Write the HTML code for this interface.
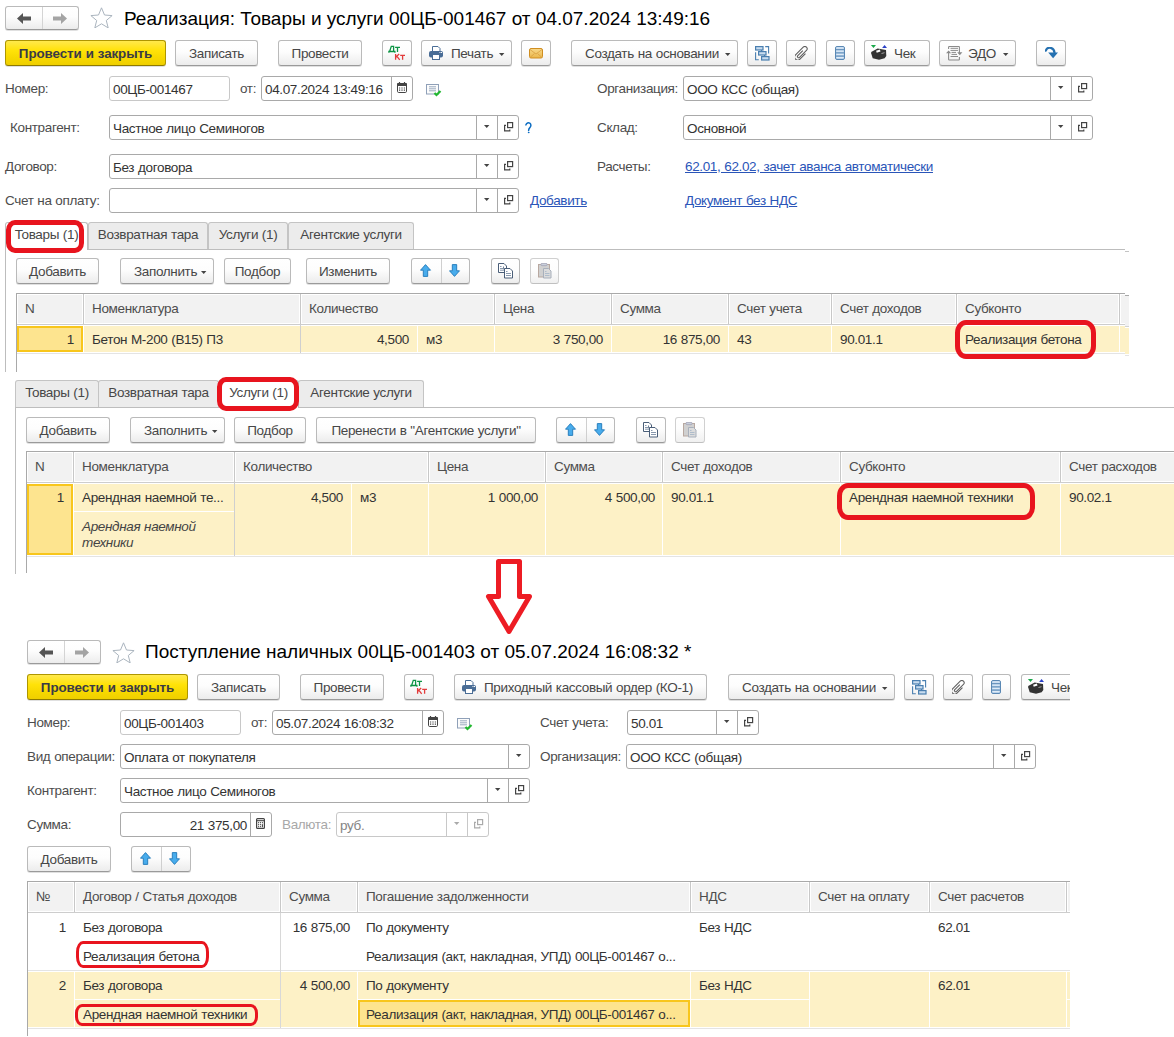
<!DOCTYPE html><html><head><meta charset="utf-8"><style>
html,body{margin:0;padding:0;background:#fff;width:1174px;height:1037px;overflow:hidden;position:relative}
.t{position:absolute;font-family:"Liberation Sans",sans-serif;font-size:13.5px;letter-spacing:-0.35px;word-spacing:0.4px;white-space:nowrap}
.b{position:absolute;border:1px solid #bababa;border-bottom-color:#9a9a9a;border-radius:3px;background:linear-gradient(#ffffff 0%,#fdfdfd 45%,#ececec 100%);box-shadow:0 1px 0 rgba(0,0,0,0.12)}
.bd{position:absolute;border:1px solid #d0d0d0;border-bottom-color:#c0c0c0;border-radius:3px;background:linear-gradient(#ffffff 0%,#fdfdfd 45%,#f0f0f0 100%)}
.by{position:absolute;border:1px solid #ae9600;border-bottom-color:#8f7a00;border-radius:3px;background:linear-gradient(#ffe94c 0%,#ffe208 40%,#f7d800 70%,#efcf00 100%);box-shadow:0 1px 0 rgba(0,0,0,0.12)}
.f{position:absolute;border:1px solid #a9a9a9;border-radius:3px;background:#fff}
</style></head><body>

<div class="b" style="left:5px;top:6px;width:72px;height:22px"></div>
<div style="position:absolute;left:42px;top:7px;width:1px;height:22px;background:#d4d4d4"></div>
<svg style="position:absolute;left:17px;top:13px" width="14" height="11"><path d="M0 5.5l6-5.5v3.5h8v4h-8v3.5z" fill="#555"/></svg>
<svg style="position:absolute;left:53px;top:13px" width="14" height="11"><path d="M14 5.5l-6-5.5v3.5h-8v4h8v3.5z" fill="#a4a4a4"/></svg>
<svg style="position:absolute;left:90px;top:7px" width="23" height="21" viewBox="0 0 23 21"><path d="M11.5 0.8l3 7.2l7.6 0.6l-5.8 4.9l1.9 7.4l-6.7-4.1l-6.7 4.1l1.9-7.4l-5.8-4.9l7.6-0.6z" fill="none" stroke="#aab4be" stroke-width="1"/></svg>
<div style="position:absolute;left:124px;top:7px;height:24px;line-height:24px;font-family:'Liberation Sans',sans-serif;font-size:19px;color:#000;white-space:nowrap">Реализация: Товары и услуги 00ЦБ-001467 от 04.07.2024 13:49:16</div>
<div class="by" style="left:5px;top:40px;width:159px;height:24px"></div>
<div class="t" style="left:5px;top:41px;height:25px;line-height:25px;color:#3a3a46;width:161px;text-align:center;font-weight:bold;font-size:13.4px;letter-spacing:-0.1px;">Провести и закрыть</div>
<div class="b" style="left:175px;top:40px;width:81px;height:24px"></div>
<div class="t" style="left:175px;top:41px;height:25px;line-height:25px;color:#474747;width:83px;text-align:center;">Записать</div>
<div class="b" style="left:278px;top:40px;width:82px;height:24px"></div>
<div class="t" style="left:278px;top:41px;height:25px;line-height:25px;color:#474747;width:84px;text-align:center;">Провести</div>
<div class="b" style="left:382px;top:40px;width:28px;height:24px"></div>
<svg style="position:absolute;left:388px;top:45px" width="18" height="16"><path d="M1.6 6.5L3.3 1.3H5.6V6.5M0.9 7.8V6.5H6.9V7.8M7.1 2.4H12M9.5 2.4V7" fill="none" stroke="#0c9444" stroke-width="1.3"/><path d="M7.6 8.9V14.8M7.8 12L11.2 8.9M8.8 11.2L11.7 14.8M12.2 10.4H17M14.6 10.4V14.8" fill="none" stroke="#e23a3a" stroke-width="1.3"/></svg>
<div class="b" style="left:421px;top:40px;width:89px;height:24px"></div>
<div class="t" style="left:451px;top:41px;height:25px;line-height:25px;color:#474747;text-align:left;">Печать</div>
<svg style="position:absolute;left:499px;top:53px" width="6" height="4"><path d="M0 0h5.4l-2.7 3z" fill="#444"/></svg>
<svg style="position:absolute;left:429px;top:46px" width="15" height="14"><path d="M3.5 0.5h5.5l2 2v3h-7.5z" fill="#fff" stroke="#4a6d96"/><rect x="0" y="5" width="14" height="6.5" rx="2" fill="#4a6d96"/><rect x="3.5" y="8.5" width="7" height="5" fill="#fff" stroke="#4a6d96"/><path d="M10.5 6.5h1M12 6.5h1" stroke="#fff"/></svg>
<div class="b" style="left:521px;top:40px;width:28px;height:24px"></div>
<svg style="position:absolute;left:529px;top:48px" width="15" height="11"><defs><linearGradient id="mg" x1="0" y1="0" x2="0" y2="1"><stop offset="0" stop-color="#f9d98a"/><stop offset="1" stop-color="#eab64a"/></linearGradient></defs><rect x="0.5" y="0.5" width="13" height="9.5" rx="1.5" fill="url(#mg)" stroke="#d08e20"/><path d="M1 1.5l6 4.5l6-4.5M1 9.5l4.5-4M13 9.5l-4.5-4" fill="none" stroke="#d8a040" stroke-width="0.8"/></svg>
<div class="b" style="left:571px;top:40px;width:165px;height:24px"></div>
<div class="t" style="left:585px;top:41px;height:25px;line-height:25px;color:#474747;text-align:left;">Создать на основании</div>
<svg style="position:absolute;left:725px;top:53px" width="6" height="4"><path d="M0 0h5.4l-2.7 3z" fill="#444"/></svg>
<div class="b" style="left:747px;top:40px;width:28px;height:24px"></div>
<svg style="position:absolute;left:755px;top:46px" width="15" height="15"><rect x="0.6" y="0.6" width="7.4" height="3.4" fill="#c8dcef" stroke="#4a7fb0" stroke-width="1.2"/><rect x="3.6" y="5.6" width="7.4" height="3.4" fill="#c8dcef" stroke="#4a7fb0" stroke-width="1.2"/><rect x="6.6" y="10.6" width="7.4" height="3.4" fill="#c8dcef" stroke="#4a7fb0" stroke-width="1.2"/><path d="M6.5 4v1.6M9.5 9v1.6" stroke="#4a7fb0" stroke-width="1.1"/><path d="M10.2 0.6h3.4v7" fill="none" stroke="#4a7fb0" stroke-width="1.1"/><path d="M0.6 6.2v7.6h3.2" fill="none" stroke="#4a7fb0" stroke-width="1.1"/></svg>
<div class="b" style="left:786px;top:40px;width:28px;height:24px"></div>
<svg style="position:absolute;left:795px;top:46px" width="14" height="14"><path transform="translate(6.5,6.8) rotate(45)" d="M-0.6 -2.5V4.6A1.2 1.2 0 0 0 1.8 4.6V-5.2A2.3 2.3 0 0 0 -2.8 -5.2V5.6A3.1 3.1 0 0 0 3.4 5.6V-2.2" fill="none" stroke="#5e5e5e" stroke-width="1.05"/></svg>
<div class="b" style="left:826px;top:40px;width:27px;height:24px"></div>
<svg style="position:absolute;left:835px;top:46px" width="10" height="14"><rect x="0.5" y="0.5" width="9" height="13" rx="1.5" fill="#b6d0ea" stroke="#5a88b4"/><path d="M0.5 3.7h9M0.5 6.9h9M0.5 10.1h9" stroke="#5a88b4" stroke-width="1"/><path d="M1.5 2h7M1.5 5.2h7M1.5 8.4h7M1.5 11.6h7" stroke="#e4eef8" stroke-width="1"/></svg>
<div class="b" style="left:864px;top:40px;width:64px;height:24px"></div>
<div class="t" style="left:894px;top:41px;height:25px;line-height:25px;color:#474747;text-align:left;">Чек</div>
<svg style="position:absolute;left:870px;top:44px" width="18" height="17"><path d="M0.9 0.9h5.1l-2.55 3.2z" fill="#19a84a"/><path d="M12.1 4h4.9l-2.45-3.1z" fill="#2a40c8"/><path d="M1.2 8.1L7.6 4.4L16 6.1L16.3 11.9L14.6 14.2L9 15.7L2.7 14.2L1.2 9.6z" fill="#333"/><path d="M6.1 6.7L9.9 5.5L10.5 7.6L6.7 8.7z" fill="#fff"/><path d="M11.5 9.5l3-0.8" stroke="#bbb" stroke-width="0.8"/></svg>
<div class="b" style="left:939px;top:40px;width:75px;height:24px"></div>
<div class="t" style="left:968px;top:41px;height:25px;line-height:25px;color:#474747;text-align:left;">ЭДО</div>
<svg style="position:absolute;left:1003px;top:53px" width="6" height="4"><path d="M0 0h5.4l-2.7 3z" fill="#444"/></svg>
<svg style="position:absolute;left:946px;top:46px" width="17" height="15"><path d="M2.6 3V1.2q0-0.7 0.7-0.7h9.4q0.7 0 0.7 0.7V8" fill="none" stroke="#8a8a8a" stroke-width="1.1"/><path d="M13.4 11v2.3q0 0.7-0.7 0.7H3.3q-0.7 0-0.7-0.7V5.5" fill="none" stroke="#8a8a8a" stroke-width="1.1"/><path d="M4.5 2.3h7.5M4.5 4.4h7.5M5.5 6.4h4.5M5.5 8.4h5.5M4.5 10.5h7.5" stroke="#8a8a8a" stroke-width="1"/><path d="M0 7.3l2.6-2.9l2.6 2.9z" fill="#8a8a8a"/><path d="M11.2 6.2h5.2l-2.6 3z" fill="#8a8a8a"/></svg>
<div class="b" style="left:1036px;top:40px;width:28px;height:24px"></div>
<svg style="position:absolute;left:1045px;top:47px" width="14" height="12"><path d="M0.8 3.7c0.8-2.5 3-3.2 5-2.8c2 0.5 3.5 2.5 3.7 4.8" fill="none" stroke="#2470b0" stroke-width="2.2" stroke-linecap="round"/><path d="M3.2 5.4h9.8l-4.9 5.8z" fill="#2470b0"/></svg>
<div class="t" style="left:5px;top:77px;height:24px;line-height:24px;color:#4d4d4d;text-align:left;">Номер:</div>
<div class="f" style="left:109px;top:76px;width:119px;height:23px;border-color:#c8c8c8"></div>
<div class="t" style="left:113px;top:77px;height:25px;line-height:25px;color:#333;text-align:left;">00ЦБ-001467</div>
<div class="t" style="left:240px;top:77px;height:24px;line-height:24px;color:#4d4d4d;text-align:left;">от:</div>
<div class="f" style="left:261px;top:76px;width:150px;height:23px;border-color:#a9a9a9"></div>
<div style="position:absolute;left:391px;top:76px;width:1px;height:25px;background:#a9a9a9"></div>
<svg style="position:absolute;left:397px;top:82px" width="10" height="11"><rect x="0.5" y="1.5" width="9" height="9" rx="1.2" fill="#fff" stroke="#444"/><rect x="0" y="1" width="10" height="3" rx="1" fill="#444"/><path d="M2.5 0v2M7.5 0v2" stroke="#444" stroke-width="1.2"/><path d="M2 6h1.2M4.4 6h1.2M6.8 6h1.2M2 8.2h1.2M4.4 8.2h1.2M6.8 8.2h1.2" stroke="#444" stroke-width="1.2"/></svg>
<div class="t" style="left:265px;top:77px;height:25px;line-height:25px;color:#333;text-align:left;">04.07.2024 13:49:16</div>
<svg style="position:absolute;left:426px;top:84px" width="16" height="13"><rect x="0.5" y="0.5" width="12" height="9.5" fill="#fcfcfc" stroke="#8fa0b8"/><path d="M3 2.8h7M3 4.8h7M3 6.8h7" stroke="#8fa0b8" stroke-width="0.9"/><path d="M8.5 9l2 2l4-4" fill="none" stroke="#22b830" stroke-width="2.2"/></svg>
<div class="t" style="left:597px;top:77px;height:24px;line-height:24px;color:#4d4d4d;text-align:left;">Организация:</div>
<div class="f" style="left:683px;top:76px;width:408px;height:23px;border-color:#a9a9a9"></div>
<div style="position:absolute;left:1071px;top:76px;width:1px;height:25px;background:#a9a9a9"></div>
<svg style="position:absolute;left:1078px;top:83px" width="10" height="10"><rect x="3.6" y="0.6" width="5" height="5" fill="none" stroke="#444" stroke-width="1.2"/><path d="M2 3.4H0.6V8.8H5.8V7.6" fill="none" stroke="#444" stroke-width="1.2"/></svg>
<div style="position:absolute;left:1050px;top:76px;width:1px;height:25px;background:#a9a9a9"></div>
<svg style="position:absolute;left:1058px;top:86px" width="6" height="4"><path d="M0 0h5.4l-2.7 3z" fill="#444"/></svg>
<div class="t" style="left:687px;top:77px;height:25px;line-height:25px;color:#333;text-align:left;">ООО КСС (общая)</div>
<div class="t" style="left:10px;top:116px;height:24px;line-height:24px;color:#4d4d4d;text-align:left;">Контрагент:</div>
<div class="f" style="left:109px;top:115px;width:408px;height:23px;border-color:#a9a9a9"></div>
<div style="position:absolute;left:497px;top:115px;width:1px;height:25px;background:#a9a9a9"></div>
<svg style="position:absolute;left:504px;top:122px" width="10" height="10"><rect x="3.6" y="0.6" width="5" height="5" fill="none" stroke="#444" stroke-width="1.2"/><path d="M2 3.4H0.6V8.8H5.8V7.6" fill="none" stroke="#444" stroke-width="1.2"/></svg>
<div style="position:absolute;left:476px;top:115px;width:1px;height:25px;background:#a9a9a9"></div>
<svg style="position:absolute;left:484px;top:125px" width="6" height="4"><path d="M0 0h5.4l-2.7 3z" fill="#444"/></svg>
<div class="t" style="left:113px;top:116px;height:25px;line-height:25px;color:#333;text-align:left;">Частное лицо Семиногов</div>
<svg style="position:absolute;left:524px;top:122px" width="10" height="13"><path d="M1.9 2.9C2.5 0.9 4.5 0.5 5.7 1.2C7.1 2.1 7.3 3.8 6.1 5.2C5.1 6.3 4.6 6.9 4.6 8.4" fill="none" stroke="#0b6cc2" stroke-width="1.5" stroke-linecap="round"/><ellipse cx="4.7" cy="10.6" rx="0.95" ry="0.75" fill="#0b6cc2"/></svg>
<div class="t" style="left:597px;top:116px;height:24px;line-height:24px;color:#4d4d4d;text-align:left;">Склад:</div>
<div class="f" style="left:683px;top:115px;width:408px;height:23px;border-color:#a9a9a9"></div>
<div style="position:absolute;left:1071px;top:115px;width:1px;height:25px;background:#a9a9a9"></div>
<svg style="position:absolute;left:1078px;top:122px" width="10" height="10"><rect x="3.6" y="0.6" width="5" height="5" fill="none" stroke="#444" stroke-width="1.2"/><path d="M2 3.4H0.6V8.8H5.8V7.6" fill="none" stroke="#444" stroke-width="1.2"/></svg>
<div style="position:absolute;left:1050px;top:115px;width:1px;height:25px;background:#a9a9a9"></div>
<svg style="position:absolute;left:1058px;top:125px" width="6" height="4"><path d="M0 0h5.4l-2.7 3z" fill="#444"/></svg>
<div class="t" style="left:687px;top:116px;height:25px;line-height:25px;color:#333;text-align:left;">Основной</div>
<div class="t" style="left:5px;top:155px;height:24px;line-height:24px;color:#4d4d4d;text-align:left;">Договор:</div>
<div class="f" style="left:109px;top:154px;width:408px;height:23px;border-color:#a9a9a9"></div>
<div style="position:absolute;left:497px;top:154px;width:1px;height:25px;background:#a9a9a9"></div>
<svg style="position:absolute;left:504px;top:161px" width="10" height="10"><rect x="3.6" y="0.6" width="5" height="5" fill="none" stroke="#444" stroke-width="1.2"/><path d="M2 3.4H0.6V8.8H5.8V7.6" fill="none" stroke="#444" stroke-width="1.2"/></svg>
<div style="position:absolute;left:476px;top:154px;width:1px;height:25px;background:#a9a9a9"></div>
<svg style="position:absolute;left:484px;top:164px" width="6" height="4"><path d="M0 0h5.4l-2.7 3z" fill="#444"/></svg>
<div class="t" style="left:113px;top:155px;height:25px;line-height:25px;color:#333;text-align:left;">Без договора</div>
<div class="t" style="left:597px;top:155px;height:24px;line-height:24px;color:#4d4d4d;text-align:left;">Расчеты:</div>
<div class="t" style="left:685px;top:155px;height:24px;line-height:24px;color:#2a55b8;text-align:left;text-decoration:underline;">62.01, 62.02, зачет аванса автоматически</div>
<div class="t" style="left:5px;top:189px;height:24px;line-height:24px;color:#4d4d4d;text-align:left;">Счет на оплату:</div>
<div class="f" style="left:109px;top:188px;width:408px;height:23px;border-color:#a9a9a9"></div>
<div style="position:absolute;left:497px;top:188px;width:1px;height:25px;background:#a9a9a9"></div>
<svg style="position:absolute;left:504px;top:195px" width="10" height="10"><rect x="3.6" y="0.6" width="5" height="5" fill="none" stroke="#444" stroke-width="1.2"/><path d="M2 3.4H0.6V8.8H5.8V7.6" fill="none" stroke="#444" stroke-width="1.2"/></svg>
<div style="position:absolute;left:476px;top:188px;width:1px;height:25px;background:#a9a9a9"></div>
<svg style="position:absolute;left:484px;top:198px" width="6" height="4"><path d="M0 0h5.4l-2.7 3z" fill="#444"/></svg>
<div class="t" style="left:530px;top:189px;height:24px;line-height:24px;color:#2a55b8;text-align:left;text-decoration:underline;">Добавить</div>
<div class="t" style="left:685px;top:189px;height:24px;line-height:24px;color:#2a55b8;text-align:left;text-decoration:underline;">Документ без НДС</div>
<div style="position:absolute;left:5px;top:249px;width:1120px;height:1px;background:#bdbdbd"></div>
<div style="position:absolute;left:1125px;top:251px;width:4px;height:1px;background:#c4c4c4"></div>
<div style="position:absolute;left:5px;top:249px;width:1px;height:123px;background:#bdbdbd"></div>
<div style="position:absolute;left:88px;top:222px;width:118px;height:26px;background:#ececec;border:1px solid #c4c4c4;border-bottom:none;border-radius:3px 3px 0 0"></div>
<div class="t" style="left:88px;top:223px;height:24px;line-height:24px;color:#474747;width:120px;text-align:center;">Возвратная тара</div>
<div style="position:absolute;left:208px;top:222px;width:78px;height:26px;background:#ececec;border:1px solid #c4c4c4;border-bottom:none;border-radius:3px 3px 0 0"></div>
<div class="t" style="left:208px;top:223px;height:24px;line-height:24px;color:#474747;width:80px;text-align:center;">Услуги (1)</div>
<div style="position:absolute;left:288px;top:222px;width:124px;height:26px;background:#ececec;border:1px solid #c4c4c4;border-bottom:none;border-radius:3px 3px 0 0"></div>
<div class="t" style="left:288px;top:223px;height:24px;line-height:24px;color:#474747;width:126px;text-align:center;">Агентские услуги</div>
<div style="position:absolute;left:5px;top:222px;width:81px;height:27px;background:#fff;border:1px solid #bdbdbd;border-bottom:none;border-radius:3px 3px 0 0"></div>
<div class="t" style="left:5px;top:223px;height:24px;line-height:24px;color:#474747;width:83px;text-align:center;">Товары (1)</div>
<div class="b" style="left:16px;top:258px;width:81px;height:24px"></div>
<div class="t" style="left:16px;top:259px;height:25px;line-height:25px;color:#474747;width:83px;text-align:center;">Добавить</div>
<div class="b" style="left:120px;top:258px;width:92px;height:24px"></div>
<div class="t" style="left:134px;top:259px;height:25px;line-height:25px;color:#474747;text-align:left;">Заполнить</div>
<svg style="position:absolute;left:201px;top:271px" width="6" height="4"><path d="M0 0h5.4l-2.7 3z" fill="#444"/></svg>
<div class="b" style="left:224px;top:258px;width:65px;height:24px"></div>
<div class="t" style="left:224px;top:259px;height:25px;line-height:25px;color:#474747;width:67px;text-align:center;">Подбор</div>
<div class="b" style="left:306px;top:258px;width:82px;height:24px"></div>
<div class="t" style="left:306px;top:259px;height:25px;line-height:25px;color:#474747;width:84px;text-align:center;">Изменить</div>
<div class="b" style="left:411px;top:258px;width:57px;height:24px"></div>
<div style="position:absolute;left:441px;top:259px;width:1px;height:24px;background:#cfcfcf"></div>
<svg style="position:absolute;left:420px;top:264px" width="12" height="13"><path d="M5.5 0.6l5 5.6h-2.8v6.2h-4.4v-6.2h-2.8z" fill="#48acec" stroke="#2078b8" stroke-width="0.9" stroke-linejoin="round"/></svg>
<svg style="position:absolute;left:449px;top:264px" width="12" height="13"><path d="M5.5 12.4l5-5.6h-2.8v-6.2h-4.4v6.2h-2.8z" fill="#48acec" stroke="#2078b8" stroke-width="0.9" stroke-linejoin="round"/></svg>
<div class="b" style="left:491px;top:258px;width:27px;height:24px"></div>
<svg style="position:absolute;left:498px;top:263px" width="16" height="16"><path d="M0.5 0.5h5.5l2.5 2.5v6.5h-8z" fill="#fff" stroke="#4a5e78"/><path d="M5.5 3.5v2.5h3" fill="none" stroke="#4a5e78" stroke-width="0.8"/><path d="M6.5 5.5h5.5l2.5 2.5v7h-8z" fill="#fff" stroke="#4a5e78"/><path d="M2 3.5h1.5M2 5.5h4M2 7.2h4M8 8.5h1.5M8 10.5h5M8 12.5h5" stroke="#7a8ca4" stroke-width="0.9"/></svg>
<div class="bd" style="left:530px;top:258px;width:27px;height:24px"></div>
<svg style="position:absolute;left:538px;top:263px" width="15" height="16"><rect x="0.5" y="1.5" width="11" height="12.5" fill="#d0d0d0" stroke="#b8a8a0"/><rect x="3" y="0.3" width="6" height="2.4" rx="1" fill="#c8d0dc" stroke="#aab"/><path d="M5.5 5.5h5l2.5 2.5v7h-7.5z" fill="#dcdcdc" stroke="#a8b0bc"/><path d="M7 8.5h1.5M7 10.5h4.5M7 12.5h4.5" stroke="#a8b8c8" stroke-width="0.9"/></svg>
<div style="position:absolute;left:17px;top:326px;width:1108px;height:26px;background:#fdf1c6"></div>
<div style="position:absolute;left:17px;top:352px;width:1108px;height:1px;background:#ffffff"></div>
<div style="position:absolute;left:16px;top:353px;width:1109px;height:1px;background:#e4e4e4"></div>
<div style="position:absolute;left:83px;top:326px;width:1px;height:26px;background:#ffffff"></div>
<div style="position:absolute;left:300px;top:326px;width:1px;height:26px;background:#ffffff"></div>
<div style="position:absolute;left:494px;top:326px;width:1px;height:26px;background:#ffffff"></div>
<div style="position:absolute;left:611px;top:326px;width:1px;height:26px;background:#ffffff"></div>
<div style="position:absolute;left:728px;top:326px;width:1px;height:26px;background:#ffffff"></div>
<div style="position:absolute;left:831px;top:326px;width:1px;height:26px;background:#ffffff"></div>
<div style="position:absolute;left:956px;top:326px;width:1px;height:26px;background:#ffffff"></div>
<div style="position:absolute;left:1119px;top:326px;width:1px;height:26px;background:#ffffff"></div>
<div style="position:absolute;left:17px;top:294px;width:1108px;height:30px;background:#f2f2f2"></div>
<div style="position:absolute;left:16px;top:293px;width:1109px;height:1px;background:#a9a9a9"></div>
<div style="position:absolute;left:17px;top:294px;width:1108px;height:1px;background:#ffffff"></div>
<div style="position:absolute;left:17px;top:323px;width:1108px;height:1px;background:#ffffff"></div>
<div style="position:absolute;left:16px;top:324px;width:1109px;height:1px;background:#cdcdcd"></div>
<div style="position:absolute;left:17px;top:325px;width:1108px;height:1px;background:#ffffff"></div>
<div style="position:absolute;left:17px;top:294px;width:1px;height:30px;background:#ffffff"></div>
<div style="position:absolute;left:82px;top:294px;width:1px;height:30px;background:#ffffff"></div>
<div style="position:absolute;left:83px;top:294px;width:1px;height:30px;background:#c8c8c8"></div>
<div style="position:absolute;left:84px;top:294px;width:1px;height:30px;background:#ffffff"></div>
<div style="position:absolute;left:299px;top:294px;width:1px;height:30px;background:#ffffff"></div>
<div style="position:absolute;left:300px;top:294px;width:1px;height:30px;background:#c8c8c8"></div>
<div style="position:absolute;left:301px;top:294px;width:1px;height:30px;background:#ffffff"></div>
<div style="position:absolute;left:493px;top:294px;width:1px;height:30px;background:#ffffff"></div>
<div style="position:absolute;left:494px;top:294px;width:1px;height:30px;background:#c8c8c8"></div>
<div style="position:absolute;left:495px;top:294px;width:1px;height:30px;background:#ffffff"></div>
<div style="position:absolute;left:610px;top:294px;width:1px;height:30px;background:#ffffff"></div>
<div style="position:absolute;left:611px;top:294px;width:1px;height:30px;background:#c8c8c8"></div>
<div style="position:absolute;left:612px;top:294px;width:1px;height:30px;background:#ffffff"></div>
<div style="position:absolute;left:727px;top:294px;width:1px;height:30px;background:#ffffff"></div>
<div style="position:absolute;left:728px;top:294px;width:1px;height:30px;background:#c8c8c8"></div>
<div style="position:absolute;left:729px;top:294px;width:1px;height:30px;background:#ffffff"></div>
<div style="position:absolute;left:830px;top:294px;width:1px;height:30px;background:#ffffff"></div>
<div style="position:absolute;left:831px;top:294px;width:1px;height:30px;background:#c8c8c8"></div>
<div style="position:absolute;left:832px;top:294px;width:1px;height:30px;background:#ffffff"></div>
<div style="position:absolute;left:955px;top:294px;width:1px;height:30px;background:#ffffff"></div>
<div style="position:absolute;left:956px;top:294px;width:1px;height:30px;background:#c8c8c8"></div>
<div style="position:absolute;left:957px;top:294px;width:1px;height:30px;background:#ffffff"></div>
<div style="position:absolute;left:1118px;top:294px;width:1px;height:30px;background:#ffffff"></div>
<div style="position:absolute;left:1119px;top:294px;width:1px;height:30px;background:#c8c8c8"></div>
<div style="position:absolute;left:1120px;top:294px;width:1px;height:30px;background:#ffffff"></div>
<div class="t" style="left:25px;top:294px;height:30px;line-height:30px;color:#4d4d4d;text-align:left;">N</div>
<div class="t" style="left:92px;top:294px;height:30px;line-height:30px;color:#4d4d4d;text-align:left;">Номенклатура</div>
<div class="t" style="left:309px;top:294px;height:30px;line-height:30px;color:#4d4d4d;text-align:left;">Количество</div>
<div class="t" style="left:503px;top:294px;height:30px;line-height:30px;color:#4d4d4d;text-align:left;">Цена</div>
<div class="t" style="left:620px;top:294px;height:30px;line-height:30px;color:#4d4d4d;text-align:left;">Сумма</div>
<div class="t" style="left:737px;top:294px;height:30px;line-height:30px;color:#4d4d4d;text-align:left;">Счет учета</div>
<div class="t" style="left:840px;top:294px;height:30px;line-height:30px;color:#4d4d4d;text-align:left;">Счет доходов</div>
<div class="t" style="left:965px;top:294px;height:30px;line-height:30px;color:#4d4d4d;text-align:left;">Субконто</div>
<div style="position:absolute;left:417px;top:326px;width:1px;height:26px;background:#ffffff"></div>
<div style="position:absolute;left:16px;top:293px;width:1px;height:79px;background:#a9a9a9"></div>
<div style="position:absolute;left:300px;top:325px;width:1px;height:28px;background:#cfcfcf"></div>
<div style="position:absolute;left:17px;top:326px;width:62px;height:22px;background:#fde48f;border:2px solid #f8c61c"></div>
<div class="t" style="left:17px;top:327px;height:25px;line-height:25px;color:#333;width:57px;text-align:right;">1</div>
<div class="t" style="left:92px;top:327px;height:25px;line-height:25px;color:#333;text-align:left;">Бетон М-200 (В15) П3</div>
<div class="t" style="left:300px;top:327px;height:25px;line-height:25px;color:#333;width:109px;text-align:right;">4,500</div>
<div class="t" style="left:426px;top:327px;height:25px;line-height:25px;color:#333;text-align:left;">м3</div>
<div class="t" style="left:494px;top:327px;height:25px;line-height:25px;color:#333;width:109px;text-align:right;">3 750,00</div>
<div class="t" style="left:611px;top:327px;height:25px;line-height:25px;color:#333;width:109px;text-align:right;">16 875,00</div>
<div class="t" style="left:737px;top:327px;height:25px;line-height:25px;color:#333;text-align:left;">43</div>
<div class="t" style="left:840px;top:327px;height:25px;line-height:25px;color:#333;text-align:left;">90.01.1</div>
<div class="t" style="left:965px;top:327px;height:25px;line-height:25px;color:#333;text-align:left;">Реализация бетона</div>
<div style="position:absolute;left:1125px;top:295px;width:4px;height:31px;background:#f2f2f2"></div>
<div style="position:absolute;left:1125px;top:295px;width:4px;height:1px;background:#a9a9a9"></div>
<div style="position:absolute;left:1125px;top:326px;width:4px;height:1px;background:#d2d2d2"></div>
<div style="position:absolute;left:1125px;top:328px;width:4px;height:26px;background:#fdf1c6"></div>
<div style="position:absolute;left:1125px;top:355px;width:4px;height:1px;background:#e4e4e4"></div>
<div style="position:absolute;left:6px;top:220px;width:68px;height:23px;border:5px solid #e8141e;border-radius:9px/10px"></div>
<div style="position:absolute;left:955px;top:320px;width:131px;height:29px;border:5px solid #e8141e;border-radius:11px/13px"></div>
<div style="position:absolute;left:15px;top:407px;width:1159px;height:1px;background:#bdbdbd"></div>
<div style="position:absolute;left:15px;top:407px;width:1px;height:167px;background:#bdbdbd"></div>
<div style="position:absolute;left:15px;top:380px;width:82px;height:26px;background:#ececec;border:1px solid #c4c4c4;border-bottom:none;border-radius:3px 3px 0 0"></div>
<div class="t" style="left:15px;top:381px;height:24px;line-height:24px;color:#474747;width:84px;text-align:center;">Товары (1)</div>
<div style="position:absolute;left:98px;top:380px;width:119px;height:26px;background:#ececec;border:1px solid #c4c4c4;border-bottom:none;border-radius:3px 3px 0 0"></div>
<div class="t" style="left:98px;top:381px;height:24px;line-height:24px;color:#474747;width:121px;text-align:center;">Возвратная тара</div>
<div style="position:absolute;left:298px;top:380px;width:124px;height:26px;background:#ececec;border:1px solid #c4c4c4;border-bottom:none;border-radius:3px 3px 0 0"></div>
<div class="t" style="left:298px;top:381px;height:24px;line-height:24px;color:#474747;width:126px;text-align:center;">Агентские услуги</div>
<div style="position:absolute;left:218px;top:380px;width:79px;height:27px;background:#fff;border:1px solid #bdbdbd;border-bottom:none;border-radius:3px 3px 0 0"></div>
<div class="t" style="left:218px;top:381px;height:24px;line-height:24px;color:#474747;width:81px;text-align:center;">Услуги (1)</div>
<div class="b" style="left:26px;top:417px;width:82px;height:24px"></div>
<div class="t" style="left:26px;top:418px;height:25px;line-height:25px;color:#474747;width:84px;text-align:center;">Добавить</div>
<div class="b" style="left:130px;top:417px;width:93px;height:24px"></div>
<div class="t" style="left:144px;top:418px;height:25px;line-height:25px;color:#474747;text-align:left;">Заполнить</div>
<svg style="position:absolute;left:212px;top:430px" width="6" height="4"><path d="M0 0h5.4l-2.7 3z" fill="#444"/></svg>
<div class="b" style="left:234px;top:417px;width:70px;height:24px"></div>
<div class="t" style="left:234px;top:418px;height:25px;line-height:25px;color:#474747;width:72px;text-align:center;">Подбор</div>
<div class="b" style="left:316px;top:417px;width:218px;height:24px"></div>
<div class="t" style="left:316px;top:418px;height:25px;line-height:25px;color:#474747;width:220px;text-align:center;">Перенести в "Агентские услуги"</div>
<div class="b" style="left:556px;top:417px;width:57px;height:24px"></div>
<div style="position:absolute;left:586px;top:418px;width:1px;height:24px;background:#cfcfcf"></div>
<svg style="position:absolute;left:565px;top:423px" width="12" height="13"><path d="M5.5 0.6l5 5.6h-2.8v6.2h-4.4v-6.2h-2.8z" fill="#48acec" stroke="#2078b8" stroke-width="0.9" stroke-linejoin="round"/></svg>
<svg style="position:absolute;left:594px;top:423px" width="12" height="13"><path d="M5.5 12.4l5-5.6h-2.8v-6.2h-4.4v6.2h-2.8z" fill="#48acec" stroke="#2078b8" stroke-width="0.9" stroke-linejoin="round"/></svg>
<div class="b" style="left:636px;top:417px;width:28px;height:24px"></div>
<svg style="position:absolute;left:643px;top:422px" width="16" height="16"><path d="M0.5 0.5h5.5l2.5 2.5v6.5h-8z" fill="#fff" stroke="#4a5e78"/><path d="M5.5 3.5v2.5h3" fill="none" stroke="#4a5e78" stroke-width="0.8"/><path d="M6.5 5.5h5.5l2.5 2.5v7h-8z" fill="#fff" stroke="#4a5e78"/><path d="M2 3.5h1.5M2 5.5h4M2 7.2h4M8 8.5h1.5M8 10.5h5M8 12.5h5" stroke="#7a8ca4" stroke-width="0.9"/></svg>
<div class="bd" style="left:675px;top:417px;width:28px;height:24px"></div>
<svg style="position:absolute;left:683px;top:422px" width="15" height="16"><rect x="0.5" y="1.5" width="11" height="12.5" fill="#d0d0d0" stroke="#b8a8a0"/><rect x="3" y="0.3" width="6" height="2.4" rx="1" fill="#c8d0dc" stroke="#aab"/><path d="M5.5 5.5h5l2.5 2.5v7h-7.5z" fill="#dcdcdc" stroke="#a8b0bc"/><path d="M7 8.5h1.5M7 10.5h4.5M7 12.5h4.5" stroke="#a8b8c8" stroke-width="0.9"/></svg>
<div style="position:absolute;left:27px;top:484px;width:1147px;height:71px;background:#fdf1c6"></div>
<div style="position:absolute;left:27px;top:555px;width:1147px;height:1px;background:#ffffff"></div>
<div style="position:absolute;left:26px;top:556px;width:1148px;height:1px;background:#e4e4e4"></div>
<div style="position:absolute;left:73px;top:484px;width:1px;height:71px;background:#ffffff"></div>
<div style="position:absolute;left:234px;top:484px;width:1px;height:71px;background:#ffffff"></div>
<div style="position:absolute;left:428px;top:484px;width:1px;height:71px;background:#ffffff"></div>
<div style="position:absolute;left:545px;top:484px;width:1px;height:71px;background:#ffffff"></div>
<div style="position:absolute;left:662px;top:484px;width:1px;height:71px;background:#ffffff"></div>
<div style="position:absolute;left:840px;top:484px;width:1px;height:71px;background:#ffffff"></div>
<div style="position:absolute;left:1060px;top:484px;width:1px;height:71px;background:#ffffff"></div>
<div style="position:absolute;left:27px;top:452px;width:1147px;height:30px;background:#f2f2f2"></div>
<div style="position:absolute;left:26px;top:451px;width:1148px;height:1px;background:#a9a9a9"></div>
<div style="position:absolute;left:27px;top:452px;width:1147px;height:1px;background:#ffffff"></div>
<div style="position:absolute;left:27px;top:481px;width:1147px;height:1px;background:#ffffff"></div>
<div style="position:absolute;left:26px;top:482px;width:1148px;height:1px;background:#cdcdcd"></div>
<div style="position:absolute;left:27px;top:483px;width:1147px;height:1px;background:#ffffff"></div>
<div style="position:absolute;left:27px;top:452px;width:1px;height:30px;background:#ffffff"></div>
<div style="position:absolute;left:72px;top:452px;width:1px;height:30px;background:#ffffff"></div>
<div style="position:absolute;left:73px;top:452px;width:1px;height:30px;background:#c8c8c8"></div>
<div style="position:absolute;left:74px;top:452px;width:1px;height:30px;background:#ffffff"></div>
<div style="position:absolute;left:233px;top:452px;width:1px;height:30px;background:#ffffff"></div>
<div style="position:absolute;left:234px;top:452px;width:1px;height:30px;background:#c8c8c8"></div>
<div style="position:absolute;left:235px;top:452px;width:1px;height:30px;background:#ffffff"></div>
<div style="position:absolute;left:427px;top:452px;width:1px;height:30px;background:#ffffff"></div>
<div style="position:absolute;left:428px;top:452px;width:1px;height:30px;background:#c8c8c8"></div>
<div style="position:absolute;left:429px;top:452px;width:1px;height:30px;background:#ffffff"></div>
<div style="position:absolute;left:544px;top:452px;width:1px;height:30px;background:#ffffff"></div>
<div style="position:absolute;left:545px;top:452px;width:1px;height:30px;background:#c8c8c8"></div>
<div style="position:absolute;left:546px;top:452px;width:1px;height:30px;background:#ffffff"></div>
<div style="position:absolute;left:661px;top:452px;width:1px;height:30px;background:#ffffff"></div>
<div style="position:absolute;left:662px;top:452px;width:1px;height:30px;background:#c8c8c8"></div>
<div style="position:absolute;left:663px;top:452px;width:1px;height:30px;background:#ffffff"></div>
<div style="position:absolute;left:839px;top:452px;width:1px;height:30px;background:#ffffff"></div>
<div style="position:absolute;left:840px;top:452px;width:1px;height:30px;background:#c8c8c8"></div>
<div style="position:absolute;left:841px;top:452px;width:1px;height:30px;background:#ffffff"></div>
<div style="position:absolute;left:1059px;top:452px;width:1px;height:30px;background:#ffffff"></div>
<div style="position:absolute;left:1060px;top:452px;width:1px;height:30px;background:#c8c8c8"></div>
<div style="position:absolute;left:1061px;top:452px;width:1px;height:30px;background:#ffffff"></div>
<div class="t" style="left:35px;top:452px;height:30px;line-height:30px;color:#4d4d4d;text-align:left;">N</div>
<div class="t" style="left:82px;top:452px;height:30px;line-height:30px;color:#4d4d4d;text-align:left;">Номенклатура</div>
<div class="t" style="left:243px;top:452px;height:30px;line-height:30px;color:#4d4d4d;text-align:left;">Количество</div>
<div class="t" style="left:437px;top:452px;height:30px;line-height:30px;color:#4d4d4d;text-align:left;">Цена</div>
<div class="t" style="left:554px;top:452px;height:30px;line-height:30px;color:#4d4d4d;text-align:left;">Сумма</div>
<div class="t" style="left:671px;top:452px;height:30px;line-height:30px;color:#4d4d4d;text-align:left;">Счет доходов</div>
<div class="t" style="left:849px;top:452px;height:30px;line-height:30px;color:#4d4d4d;text-align:left;">Субконто</div>
<div class="t" style="left:1069px;top:452px;height:30px;line-height:30px;color:#4d4d4d;text-align:left;">Счет расходов</div>
<div style="position:absolute;left:351px;top:484px;width:1px;height:71px;background:#ffffff"></div>
<div style="position:absolute;left:26px;top:451px;width:1px;height:122px;background:#a9a9a9"></div>
<div style="position:absolute;left:234px;top:483px;width:1px;height:73px;background:#cfcfcf"></div>
<div style="position:absolute;left:74px;top:511px;width:160px;height:1px;background:#ffffff"></div>
<div style="position:absolute;left:27px;top:484px;width:42px;height:67px;background:#fde48f;border:2px solid #f8c61c"></div>
<div class="t" style="left:27px;top:485px;height:25px;line-height:25px;color:#333;width:37px;text-align:right;">1</div>
<div class="t" style="left:82px;top:485px;height:25px;line-height:25px;color:#333;text-align:left;">Арендная наемной те...</div>
<div class="t" style="left:82px;top:519px;height:16px;line-height:16px;color:#444;text-align:left;font-style:italic;">Арендная наемной</div>
<div class="t" style="left:82px;top:535px;height:16px;line-height:16px;color:#444;text-align:left;font-style:italic;">техники</div>
<div class="t" style="left:234px;top:485px;height:25px;line-height:25px;color:#333;width:109px;text-align:right;">4,500</div>
<div class="t" style="left:360px;top:485px;height:25px;line-height:25px;color:#333;text-align:left;">м3</div>
<div class="t" style="left:428px;top:485px;height:25px;line-height:25px;color:#333;width:110px;text-align:right;">1 000,00</div>
<div class="t" style="left:545px;top:485px;height:25px;line-height:25px;color:#333;width:110px;text-align:right;">4 500,00</div>
<div class="t" style="left:671px;top:485px;height:25px;line-height:25px;color:#333;text-align:left;">90.01.1</div>
<div class="t" style="left:849px;top:485px;height:25px;line-height:25px;color:#333;text-align:left;">Арендная наемной техники</div>
<div class="t" style="left:1069px;top:485px;height:25px;line-height:25px;color:#333;text-align:left;">90.02.1</div>
<div style="position:absolute;left:837px;top:483px;width:188px;height:27px;border:5px solid #e8141e;border-radius:11px/13px"></div>
<div style="position:absolute;left:217px;top:377px;width:72px;height:24px;border:5px solid #e8141e;border-radius:9px/10px"></div>
<svg style="position:absolute;left:0;top:0" width="1174" height="1037"><path d="M498.5 561.5H519.5V596.5H529.5L509 631.5L488.5 596.5H498.5Z" fill="none" stroke="#ed1c24" stroke-width="5" stroke-linejoin="round"/></svg>
<div class="b" style="left:27px;top:640px;width:72px;height:22px"></div>
<div style="position:absolute;left:64px;top:641px;width:1px;height:22px;background:#d4d4d4"></div>
<svg style="position:absolute;left:39px;top:647px" width="14" height="11"><path d="M0 5.5l6-5.5v3.5h8v4h-8v3.5z" fill="#555"/></svg>
<svg style="position:absolute;left:75px;top:647px" width="14" height="11"><path d="M14 5.5l-6-5.5v3.5h-8v4h8v3.5z" fill="#a4a4a4"/></svg>
<svg style="position:absolute;left:112px;top:642px" width="23" height="21" viewBox="0 0 23 21"><path d="M11.5 0.8l3 7.2l7.6 0.6l-5.8 4.9l1.9 7.4l-6.7-4.1l-6.7 4.1l1.9-7.4l-5.8-4.9l7.6-0.6z" fill="none" stroke="#aab4be" stroke-width="1"/></svg>
<div style="position:absolute;left:145px;top:640px;height:24px;line-height:24px;font-family:'Liberation Sans',sans-serif;font-size:19px;color:#000;white-space:nowrap">Поступление наличных 00ЦБ-001403 от 05.07.2024 16:08:32 *</div>
<div class="by" style="left:27px;top:674px;width:159px;height:24px"></div>
<div class="t" style="left:27px;top:675px;height:25px;line-height:25px;color:#3a3a46;width:161px;text-align:center;font-weight:bold;font-size:13.4px;letter-spacing:-0.1px;">Провести и закрыть</div>
<div class="b" style="left:197px;top:674px;width:81px;height:24px"></div>
<div class="t" style="left:197px;top:675px;height:25px;line-height:25px;color:#474747;width:83px;text-align:center;">Записать</div>
<div class="b" style="left:300px;top:674px;width:82px;height:24px"></div>
<div class="t" style="left:300px;top:675px;height:25px;line-height:25px;color:#474747;width:84px;text-align:center;">Провести</div>
<div class="b" style="left:404px;top:674px;width:28px;height:24px"></div>
<svg style="position:absolute;left:410px;top:679px" width="18" height="16"><path d="M1.6 6.5L3.3 1.3H5.6V6.5M0.9 7.8V6.5H6.9V7.8M7.1 2.4H12M9.5 2.4V7" fill="none" stroke="#0c9444" stroke-width="1.3"/><path d="M7.6 8.9V14.8M7.8 12L11.2 8.9M8.8 11.2L11.7 14.8M12.2 10.4H17M14.6 10.4V14.8" fill="none" stroke="#e23a3a" stroke-width="1.3"/></svg>
<div class="b" style="left:454px;top:674px;width:251px;height:24px"></div>
<div class="t" style="left:484px;top:675px;height:25px;line-height:25px;color:#474747;text-align:left;">Приходный кассовый ордер (КО-1)</div>
<svg style="position:absolute;left:462px;top:680px" width="15" height="14"><path d="M3.5 0.5h5.5l2 2v3h-7.5z" fill="#fff" stroke="#4a6d96"/><rect x="0" y="5" width="14" height="6.5" rx="2" fill="#4a6d96"/><rect x="3.5" y="8.5" width="7" height="5" fill="#fff" stroke="#4a6d96"/><path d="M10.5 6.5h1M12 6.5h1" stroke="#fff"/></svg>
<div class="b" style="left:728px;top:674px;width:165px;height:24px"></div>
<div class="t" style="left:742px;top:675px;height:25px;line-height:25px;color:#474747;text-align:left;">Создать на основании</div>
<svg style="position:absolute;left:882px;top:687px" width="6" height="4"><path d="M0 0h5.4l-2.7 3z" fill="#444"/></svg>
<div class="b" style="left:904px;top:674px;width:28px;height:24px"></div>
<svg style="position:absolute;left:912px;top:680px" width="15" height="15"><rect x="0.6" y="0.6" width="7.4" height="3.4" fill="#c8dcef" stroke="#4a7fb0" stroke-width="1.2"/><rect x="3.6" y="5.6" width="7.4" height="3.4" fill="#c8dcef" stroke="#4a7fb0" stroke-width="1.2"/><rect x="6.6" y="10.6" width="7.4" height="3.4" fill="#c8dcef" stroke="#4a7fb0" stroke-width="1.2"/><path d="M6.5 4v1.6M9.5 9v1.6" stroke="#4a7fb0" stroke-width="1.1"/><path d="M10.2 0.6h3.4v7" fill="none" stroke="#4a7fb0" stroke-width="1.1"/><path d="M0.6 6.2v7.6h3.2" fill="none" stroke="#4a7fb0" stroke-width="1.1"/></svg>
<div class="b" style="left:943px;top:674px;width:28px;height:24px"></div>
<svg style="position:absolute;left:952px;top:680px" width="14" height="14"><path transform="translate(6.5,6.8) rotate(45)" d="M-0.6 -2.5V4.6A1.2 1.2 0 0 0 1.8 4.6V-5.2A2.3 2.3 0 0 0 -2.8 -5.2V5.6A3.1 3.1 0 0 0 3.4 5.6V-2.2" fill="none" stroke="#5e5e5e" stroke-width="1.05"/></svg>
<div class="b" style="left:982px;top:674px;width:27px;height:24px"></div>
<svg style="position:absolute;left:991px;top:680px" width="10" height="14"><rect x="0.5" y="0.5" width="9" height="13" rx="1.5" fill="#b6d0ea" stroke="#5a88b4"/><path d="M0.5 3.7h9M0.5 6.9h9M0.5 10.1h9" stroke="#5a88b4" stroke-width="1"/><path d="M1.5 2h7M1.5 5.2h7M1.5 8.4h7M1.5 11.6h7" stroke="#e4eef8" stroke-width="1"/></svg>
<div style="position:absolute;left:0;top:0;width:1070px;height:1037px;overflow:hidden">
<div class="b" style="left:1021px;top:674px;width:64px;height:24px"></div>
<div class="t" style="left:1051px;top:675px;height:25px;line-height:25px;color:#474747;text-align:left;">Чек</div>
<svg style="position:absolute;left:1027px;top:678px" width="18" height="17"><path d="M0.9 0.9h5.1l-2.55 3.2z" fill="#19a84a"/><path d="M12.1 4h4.9l-2.45-3.1z" fill="#2a40c8"/><path d="M1.2 8.1L7.6 4.4L16 6.1L16.3 11.9L14.6 14.2L9 15.7L2.7 14.2L1.2 9.6z" fill="#333"/><path d="M6.1 6.7L9.9 5.5L10.5 7.6L6.7 8.7z" fill="#fff"/><path d="M11.5 9.5l3-0.8" stroke="#bbb" stroke-width="0.8"/></svg>
</div>
<div class="t" style="left:27px;top:711px;height:24px;line-height:24px;color:#4d4d4d;text-align:left;">Номер:</div>
<div class="f" style="left:120px;top:710px;width:119px;height:23px;border-color:#c8c8c8"></div>
<div class="t" style="left:124px;top:711px;height:25px;line-height:25px;color:#333;text-align:left;">00ЦБ-001403</div>
<div class="t" style="left:251px;top:711px;height:24px;line-height:24px;color:#4d4d4d;text-align:left;">от:</div>
<div class="f" style="left:272px;top:710px;width:170px;height:23px;border-color:#a9a9a9"></div>
<div style="position:absolute;left:422px;top:710px;width:1px;height:25px;background:#a9a9a9"></div>
<svg style="position:absolute;left:428px;top:716px" width="10" height="11"><rect x="0.5" y="1.5" width="9" height="9" rx="1.2" fill="#fff" stroke="#444"/><rect x="0" y="1" width="10" height="3" rx="1" fill="#444"/><path d="M2.5 0v2M7.5 0v2" stroke="#444" stroke-width="1.2"/><path d="M2 6h1.2M4.4 6h1.2M6.8 6h1.2M2 8.2h1.2M4.4 8.2h1.2M6.8 8.2h1.2" stroke="#444" stroke-width="1.2"/></svg>
<div class="t" style="left:276px;top:711px;height:25px;line-height:25px;color:#333;text-align:left;">05.07.2024 16:08:32</div>
<svg style="position:absolute;left:457px;top:718px" width="16" height="13"><rect x="0.5" y="0.5" width="12" height="9.5" fill="#fcfcfc" stroke="#8fa0b8"/><path d="M3 2.8h7M3 4.8h7M3 6.8h7" stroke="#8fa0b8" stroke-width="0.9"/><path d="M8.5 9l2 2l4-4" fill="none" stroke="#22b830" stroke-width="2.2"/></svg>
<div class="t" style="left:540px;top:711px;height:24px;line-height:24px;color:#4d4d4d;text-align:left;">Счет учета:</div>
<div class="f" style="left:627px;top:710px;width:130px;height:23px;border-color:#a9a9a9"></div>
<div style="position:absolute;left:737px;top:710px;width:1px;height:25px;background:#a9a9a9"></div>
<svg style="position:absolute;left:744px;top:717px" width="10" height="10"><rect x="3.6" y="0.6" width="5" height="5" fill="none" stroke="#444" stroke-width="1.2"/><path d="M2 3.4H0.6V8.8H5.8V7.6" fill="none" stroke="#444" stroke-width="1.2"/></svg>
<div style="position:absolute;left:716px;top:710px;width:1px;height:25px;background:#a9a9a9"></div>
<svg style="position:absolute;left:724px;top:720px" width="6" height="4"><path d="M0 0h5.4l-2.7 3z" fill="#444"/></svg>
<div class="t" style="left:631px;top:711px;height:25px;line-height:25px;color:#333;text-align:left;">50.01</div>
<div class="t" style="left:27px;top:745px;height:24px;line-height:24px;color:#4d4d4d;text-align:left;">Вид операции:</div>
<div class="f" style="left:120px;top:744px;width:408px;height:23px;border-color:#a9a9a9"></div>
<div style="position:absolute;left:508px;top:744px;width:1px;height:25px;background:#a9a9a9"></div>
<svg style="position:absolute;left:516px;top:754px" width="6" height="4"><path d="M0 0h5.4l-2.7 3z" fill="#444"/></svg>
<div class="t" style="left:124px;top:745px;height:25px;line-height:25px;color:#333;text-align:left;">Оплата от покупателя</div>
<div class="t" style="left:540px;top:745px;height:24px;line-height:24px;color:#4d4d4d;text-align:left;">Организация:</div>
<div class="f" style="left:626px;top:744px;width:408px;height:23px;border-color:#a9a9a9"></div>
<div style="position:absolute;left:1014px;top:744px;width:1px;height:25px;background:#a9a9a9"></div>
<svg style="position:absolute;left:1021px;top:751px" width="10" height="10"><rect x="3.6" y="0.6" width="5" height="5" fill="none" stroke="#444" stroke-width="1.2"/><path d="M2 3.4H0.6V8.8H5.8V7.6" fill="none" stroke="#444" stroke-width="1.2"/></svg>
<div style="position:absolute;left:993px;top:744px;width:1px;height:25px;background:#a9a9a9"></div>
<svg style="position:absolute;left:1001px;top:754px" width="6" height="4"><path d="M0 0h5.4l-2.7 3z" fill="#444"/></svg>
<div class="t" style="left:630px;top:745px;height:25px;line-height:25px;color:#333;text-align:left;">ООО КСС (общая)</div>
<div class="t" style="left:27px;top:779px;height:24px;line-height:24px;color:#4d4d4d;text-align:left;">Контрагент:</div>
<div class="f" style="left:120px;top:778px;width:408px;height:23px;border-color:#a9a9a9"></div>
<div style="position:absolute;left:508px;top:778px;width:1px;height:25px;background:#a9a9a9"></div>
<svg style="position:absolute;left:515px;top:785px" width="10" height="10"><rect x="3.6" y="0.6" width="5" height="5" fill="none" stroke="#444" stroke-width="1.2"/><path d="M2 3.4H0.6V8.8H5.8V7.6" fill="none" stroke="#444" stroke-width="1.2"/></svg>
<div style="position:absolute;left:487px;top:778px;width:1px;height:25px;background:#a9a9a9"></div>
<svg style="position:absolute;left:495px;top:788px" width="6" height="4"><path d="M0 0h5.4l-2.7 3z" fill="#444"/></svg>
<div class="t" style="left:124px;top:779px;height:25px;line-height:25px;color:#333;text-align:left;">Частное лицо Семиногов</div>
<div class="t" style="left:27px;top:813px;height:24px;line-height:24px;color:#4d4d4d;text-align:left;">Сумма:</div>
<div class="f" style="left:120px;top:812px;width:150px;height:23px;border-color:#a9a9a9"></div>
<div style="position:absolute;left:250px;top:812px;width:1px;height:25px;background:#a9a9a9"></div>
<svg style="position:absolute;left:256px;top:818px" width="10" height="12"><rect x="0.6" y="0.6" width="7.8" height="9.8" rx="0.9" fill="#fff" stroke="#444" stroke-width="1.2"/><path d="M0.6 2.7H8.4" stroke="#444" stroke-width="1.1"/><g fill="#444"><circle cx="2.6" cy="4.7" r="0.6"/><circle cx="4.5" cy="4.7" r="0.6"/><circle cx="6.4" cy="4.7" r="0.6"/><circle cx="2.6" cy="6.7" r="0.6"/><circle cx="4.5" cy="6.7" r="0.6"/><circle cx="2.6" cy="8.6" r="0.6"/><circle cx="4.5" cy="8.6" r="0.6"/></g><path d="M6.4 6.5V8.7" stroke="#444" stroke-width="1.1" stroke-linecap="round"/></svg>
<div class="t" style="left:120px;top:813px;height:25px;line-height:25px;color:#333;width:127px;text-align:right;">21 375,00</div>
<div class="t" style="left:282px;top:813px;height:24px;line-height:24px;color:#a8a8a8;text-align:left;">Валюта:</div>
<div class="f" style="left:336px;top:812px;width:151px;height:23px;border-color:#c8c8c8"></div>
<div style="position:absolute;left:467px;top:812px;width:1px;height:25px;background:#c8c8c8"></div>
<svg style="position:absolute;left:474px;top:819px" width="10" height="10"><rect x="3.6" y="0.6" width="5" height="5" fill="none" stroke="#aaa" stroke-width="1.2"/><path d="M2 3.4H0.6V8.8H5.8V7.6" fill="none" stroke="#aaa" stroke-width="1.2"/></svg>
<div style="position:absolute;left:446px;top:812px;width:1px;height:25px;background:#c8c8c8"></div>
<svg style="position:absolute;left:454px;top:822px" width="6" height="4"><path d="M0 0h5.4l-2.7 3z" fill="#aaa"/></svg>
<div class="t" style="left:340px;top:813px;height:25px;line-height:25px;color:#858585;text-align:left;">руб.</div>
<div class="b" style="left:27px;top:846px;width:82px;height:24px"></div>
<div class="t" style="left:27px;top:847px;height:25px;line-height:25px;color:#474747;width:84px;text-align:center;">Добавить</div>
<div class="b" style="left:131px;top:846px;width:58px;height:24px"></div>
<div style="position:absolute;left:161px;top:847px;width:1px;height:24px;background:#cfcfcf"></div>
<svg style="position:absolute;left:140px;top:852px" width="12" height="13"><path d="M5.5 0.6l5 5.6h-2.8v6.2h-4.4v-6.2h-2.8z" fill="#48acec" stroke="#2078b8" stroke-width="0.9" stroke-linejoin="round"/></svg>
<svg style="position:absolute;left:169px;top:852px" width="12" height="13"><path d="M5.5 12.4l5-5.6h-2.8v-6.2h-4.4v6.2h-2.8z" fill="#48acec" stroke="#2078b8" stroke-width="0.9" stroke-linejoin="round"/></svg>
<div style="position:absolute;left:27px;top:970px;width:1043px;height:1px;background:#e4e4e4"></div>
<div style="position:absolute;left:28px;top:972px;width:1042px;height:55px;background:#fdf1c6"></div>
<div style="position:absolute;left:28px;top:1027px;width:1042px;height:1px;background:#ffffff"></div>
<div style="position:absolute;left:27px;top:1028px;width:1043px;height:1px;background:#e4e4e4"></div>
<div style="position:absolute;left:74px;top:972px;width:1px;height:55px;background:#ffffff"></div>
<div style="position:absolute;left:280px;top:972px;width:1px;height:55px;background:#ffffff"></div>
<div style="position:absolute;left:357px;top:972px;width:1px;height:55px;background:#ffffff"></div>
<div style="position:absolute;left:690px;top:972px;width:1px;height:55px;background:#ffffff"></div>
<div style="position:absolute;left:809px;top:972px;width:1px;height:55px;background:#ffffff"></div>
<div style="position:absolute;left:929px;top:972px;width:1px;height:55px;background:#ffffff"></div>
<div style="position:absolute;left:1066px;top:972px;width:1px;height:55px;background:#ffffff"></div>
<div style="position:absolute;left:28px;top:882px;width:1042px;height:30px;background:#f2f2f2"></div>
<div style="position:absolute;left:27px;top:881px;width:1043px;height:1px;background:#a9a9a9"></div>
<div style="position:absolute;left:28px;top:882px;width:1042px;height:1px;background:#ffffff"></div>
<div style="position:absolute;left:28px;top:911px;width:1042px;height:1px;background:#ffffff"></div>
<div style="position:absolute;left:27px;top:912px;width:1043px;height:1px;background:#cdcdcd"></div>
<div style="position:absolute;left:28px;top:913px;width:1042px;height:1px;background:#ffffff"></div>
<div style="position:absolute;left:28px;top:882px;width:1px;height:30px;background:#ffffff"></div>
<div style="position:absolute;left:73px;top:882px;width:1px;height:30px;background:#ffffff"></div>
<div style="position:absolute;left:74px;top:882px;width:1px;height:30px;background:#c8c8c8"></div>
<div style="position:absolute;left:75px;top:882px;width:1px;height:30px;background:#ffffff"></div>
<div style="position:absolute;left:279px;top:882px;width:1px;height:30px;background:#ffffff"></div>
<div style="position:absolute;left:280px;top:882px;width:1px;height:30px;background:#c8c8c8"></div>
<div style="position:absolute;left:281px;top:882px;width:1px;height:30px;background:#ffffff"></div>
<div style="position:absolute;left:356px;top:882px;width:1px;height:30px;background:#ffffff"></div>
<div style="position:absolute;left:357px;top:882px;width:1px;height:30px;background:#c8c8c8"></div>
<div style="position:absolute;left:358px;top:882px;width:1px;height:30px;background:#ffffff"></div>
<div style="position:absolute;left:689px;top:882px;width:1px;height:30px;background:#ffffff"></div>
<div style="position:absolute;left:690px;top:882px;width:1px;height:30px;background:#c8c8c8"></div>
<div style="position:absolute;left:691px;top:882px;width:1px;height:30px;background:#ffffff"></div>
<div style="position:absolute;left:808px;top:882px;width:1px;height:30px;background:#ffffff"></div>
<div style="position:absolute;left:809px;top:882px;width:1px;height:30px;background:#c8c8c8"></div>
<div style="position:absolute;left:810px;top:882px;width:1px;height:30px;background:#ffffff"></div>
<div style="position:absolute;left:928px;top:882px;width:1px;height:30px;background:#ffffff"></div>
<div style="position:absolute;left:929px;top:882px;width:1px;height:30px;background:#c8c8c8"></div>
<div style="position:absolute;left:930px;top:882px;width:1px;height:30px;background:#ffffff"></div>
<div style="position:absolute;left:1065px;top:882px;width:1px;height:30px;background:#ffffff"></div>
<div style="position:absolute;left:1066px;top:882px;width:1px;height:30px;background:#c8c8c8"></div>
<div style="position:absolute;left:1067px;top:882px;width:1px;height:30px;background:#ffffff"></div>
<div class="t" style="left:36px;top:882px;height:30px;line-height:30px;color:#4d4d4d;text-align:left;">№</div>
<div class="t" style="left:83px;top:882px;height:30px;line-height:30px;color:#4d4d4d;text-align:left;">Договор / Статья доходов</div>
<div class="t" style="left:289px;top:882px;height:30px;line-height:30px;color:#4d4d4d;text-align:left;">Сумма</div>
<div class="t" style="left:366px;top:882px;height:30px;line-height:30px;color:#4d4d4d;text-align:left;">Погашение задолженности</div>
<div class="t" style="left:699px;top:882px;height:30px;line-height:30px;color:#4d4d4d;text-align:left;">НДС</div>
<div class="t" style="left:818px;top:882px;height:30px;line-height:30px;color:#4d4d4d;text-align:left;">Счет на оплату</div>
<div class="t" style="left:938px;top:882px;height:30px;line-height:30px;color:#4d4d4d;text-align:left;">Счет расчетов</div>
<div style="position:absolute;left:27px;top:881px;width:1px;height:155px;background:#a9a9a9"></div>
<div style="position:absolute;left:280px;top:913px;width:1px;height:115px;background:#d8d8d8"></div>
<div style="position:absolute;left:75px;top:999px;width:205px;height:1px;background:#ffffff"></div>
<div style="position:absolute;left:358px;top:999px;width:332px;height:1px;background:#ffffff"></div>
<div style="position:absolute;left:691px;top:999px;width:118px;height:1px;background:#ffffff"></div>
<div style="position:absolute;left:1067px;top:999px;width:3px;height:1px;background:#ffffff"></div>
<div style="position:absolute;left:358px;top:1000px;width:328px;height:23px;background:#fde48f;border:2px solid #f8c61c"></div>
<div class="t" style="left:27px;top:914px;height:28px;line-height:28px;color:#333;width:39px;text-align:right;">1</div>
<div class="t" style="left:83px;top:914px;height:28px;line-height:28px;color:#333;text-align:left;">Без договора</div>
<div class="t" style="left:83px;top:943px;height:28px;line-height:28px;color:#333;text-align:left;">Реализация бетона</div>
<div class="t" style="left:280px;top:914px;height:28px;line-height:28px;color:#333;width:70px;text-align:right;">16 875,00</div>
<div class="t" style="left:366px;top:914px;height:28px;line-height:28px;color:#333;text-align:left;">По документу</div>
<div class="t" style="left:366px;top:943px;height:28px;line-height:28px;color:#333;text-align:left;">Реализация (акт, накладная, УПД) 00ЦБ-001467 о...</div>
<div class="t" style="left:699px;top:914px;height:28px;line-height:28px;color:#333;text-align:left;">Без НДС</div>
<div class="t" style="left:938px;top:914px;height:28px;line-height:28px;color:#333;text-align:left;">62.01</div>
<div class="t" style="left:27px;top:972px;height:28px;line-height:28px;color:#333;width:39px;text-align:right;">2</div>
<div class="t" style="left:83px;top:972px;height:28px;line-height:28px;color:#333;text-align:left;">Без договора</div>
<div class="t" style="left:83px;top:1001px;height:28px;line-height:28px;color:#333;text-align:left;">Арендная наемной техники</div>
<div class="t" style="left:280px;top:972px;height:28px;line-height:28px;color:#333;width:70px;text-align:right;">4 500,00</div>
<div class="t" style="left:366px;top:972px;height:28px;line-height:28px;color:#333;text-align:left;">По документу</div>
<div class="t" style="left:366px;top:1001px;height:28px;line-height:28px;color:#333;text-align:left;">Реализация (акт, накладная, УПД) 00ЦБ-001467 о...</div>
<div class="t" style="left:699px;top:972px;height:28px;line-height:28px;color:#333;text-align:left;">Без НДС</div>
<div class="t" style="left:938px;top:972px;height:28px;line-height:28px;color:#333;text-align:left;">62.01</div>
<div style="position:absolute;left:76px;top:941px;width:127px;height:21px;border:3px solid #e8141e;border-radius:7px/11px"></div>
<div style="position:absolute;left:75px;top:1004px;width:177px;height:16px;border:3px solid #e8141e;border-radius:7px/9px"></div>
</body></html>
